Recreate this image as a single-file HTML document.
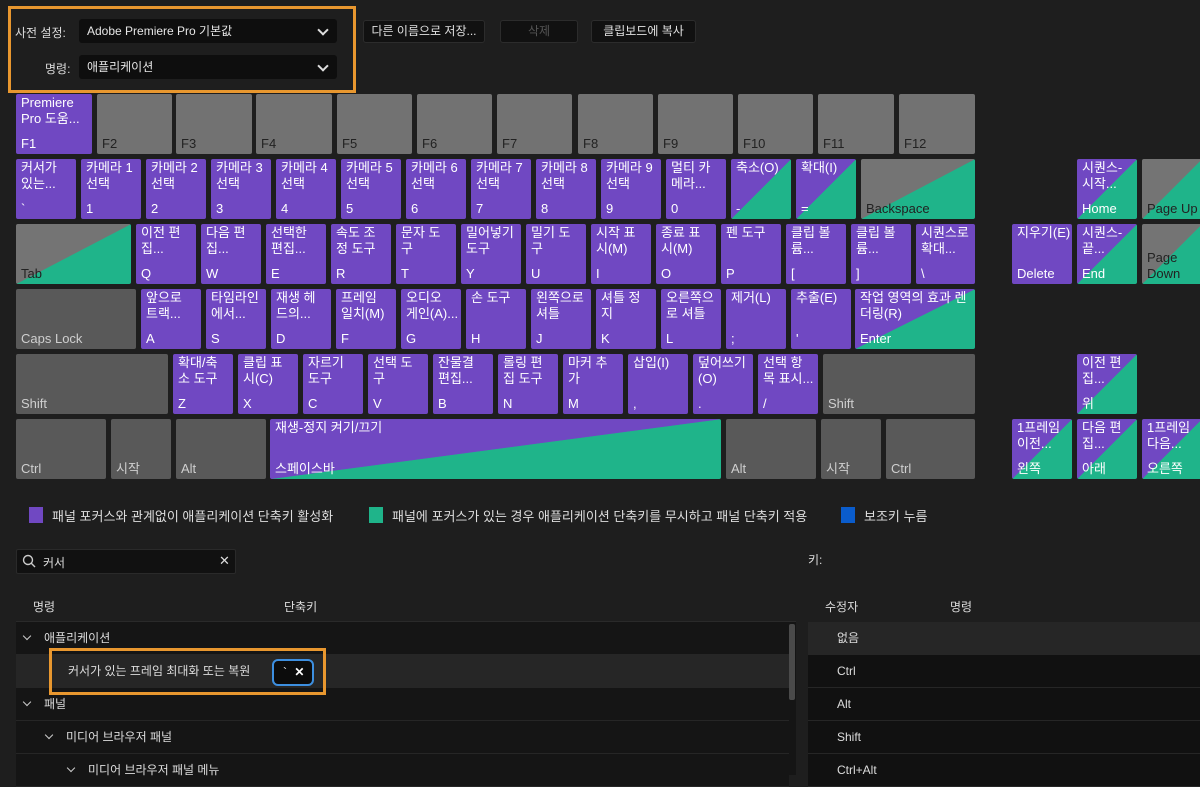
<!DOCTYPE html>
<html><head><meta charset="utf-8"><style>
*{margin:0;padding:0;box-sizing:border-box}
body{width:1200px;height:775px;background:#1e1e1e;font-family:"Liberation Sans","Noto Sans CJK KR",sans-serif;color:#ddd;position:relative;overflow:hidden;font-size:12px}
.a{position:absolute}
.k{position:absolute;height:60px;border-radius:2px;color:#fff;font-size:13px;line-height:16px;overflow:hidden}
.k .t{position:absolute;left:5px;top:1px;right:0;white-space:nowrap}
.k .b{position:absolute;left:5px;bottom:2px;right:0;white-space:nowrap}
.p{background:#7048c2}
.f{background:#727272;color:#222}
.g{background:#595959;color:#cfcfcf}
.pg{background:linear-gradient(to bottom right,#7048c2 50%,#1fb48a 50.3%)}
.gg{background:linear-gradient(to bottom right,#747474 50%,#1fb48a 50.3%);color:#222}
.dd{position:absolute;left:79px;width:258px;height:24px;background:#0e0e0e;border-radius:3px;color:#e6e6e6;font-size:12px;line-height:24px;padding-left:8px}
.dd::after{content:"";position:absolute;right:10px;top:7px;width:6px;height:6px;border-right:2px solid #ddd;border-bottom:2px solid #ddd;transform:rotate(45deg)}
.btn{position:absolute;top:20px;height:23px;background:#111;border:1px solid #2c2c2c;border-radius:3px;color:#e0e0e0;line-height:21px;text-align:center;font-size:12px}
.row{position:absolute;left:16px;width:773px;height:33px;border-bottom:1px solid #262626;background:#151515;line-height:32px;font-size:12px;color:#ddd}
.rr{position:absolute;left:808px;width:392px;height:33px;border-bottom:1px solid #262626;background:#111;line-height:32px;padding-left:29px;color:#ddd}
.chev{display:inline-block;width:6px;height:6px;border-right:1.5px solid #ccc;border-bottom:1.5px solid #ccc;transform:rotate(45deg);margin-right:14px;position:relative;top:-3px}
.lg{font-size:13px}
</style></head><body>

<div class="a" style="left:15px;top:24px;color:#ddd">사전 설정:</div>
<div class="a" style="left:45px;top:60px;color:#ddd">명령:</div>
<div class="dd" style="top:19px">Adobe Premiere Pro 기본값</div>
<div class="dd" style="top:55px">애플리케이션</div>
<div class="a" style="left:8px;top:6px;width:348px;height:87px;border:3px solid #e8972f"></div>
<div class="btn" style="left:363px;width:122px">다른 이름으로 저장...</div>
<div class="btn" style="left:500px;width:78px;color:#555">삭제</div>
<div class="btn" style="left:591px;width:105px">클립보드에 복사</div>

<!-- Row 1 -->
<div class="k p" style="left:16px;top:94px;width:76px"><div class="t">Premiere<br>Pro 도움...</div><div class="b">F1</div></div>
<div class="k f" style="left:97px;top:94px;width:75px"><div class="b">F2</div></div>
<div class="k f" style="left:176px;top:94px;width:76px"><div class="b">F3</div></div>
<div class="k f" style="left:256px;top:94px;width:76px"><div class="b">F4</div></div>
<div class="k f" style="left:337px;top:94px;width:75px"><div class="b">F5</div></div>
<div class="k f" style="left:417px;top:94px;width:75px"><div class="b">F6</div></div>
<div class="k f" style="left:497px;top:94px;width:75px"><div class="b">F7</div></div>
<div class="k f" style="left:578px;top:94px;width:75px"><div class="b">F8</div></div>
<div class="k f" style="left:658px;top:94px;width:75px"><div class="b">F9</div></div>
<div class="k f" style="left:738px;top:94px;width:75px"><div class="b">F10</div></div>
<div class="k f" style="left:818px;top:94px;width:76px"><div class="b">F11</div></div>
<div class="k f" style="left:899px;top:94px;width:76px"><div class="b">F12</div></div>

<!-- Row 2 -->
<div class="k p" style="left:16px;top:159px;width:60px"><div class="t">커서가<br>있는...</div><div class="b">`</div></div>
<div class="k p" style="left:81px;top:159px;width:60px"><div class="t">카메라 1<br>선택</div><div class="b">1</div></div>
<div class="k p" style="left:146px;top:159px;width:60px"><div class="t">카메라 2<br>선택</div><div class="b">2</div></div>
<div class="k p" style="left:211px;top:159px;width:60px"><div class="t">카메라 3<br>선택</div><div class="b">3</div></div>
<div class="k p" style="left:276px;top:159px;width:60px"><div class="t">카메라 4<br>선택</div><div class="b">4</div></div>
<div class="k p" style="left:341px;top:159px;width:60px"><div class="t">카메라 5<br>선택</div><div class="b">5</div></div>
<div class="k p" style="left:406px;top:159px;width:60px"><div class="t">카메라 6<br>선택</div><div class="b">6</div></div>
<div class="k p" style="left:471px;top:159px;width:60px"><div class="t">카메라 7<br>선택</div><div class="b">7</div></div>
<div class="k p" style="left:536px;top:159px;width:60px"><div class="t">카메라 8<br>선택</div><div class="b">8</div></div>
<div class="k p" style="left:601px;top:159px;width:60px"><div class="t">카메라 9<br>선택</div><div class="b">9</div></div>
<div class="k p" style="left:666px;top:159px;width:60px"><div class="t">멀티 카<br>메라...</div><div class="b">0</div></div>
<div class="k pg" style="left:731px;top:159px;width:60px"><div class="t">축소(O)</div><div class="b">-</div></div>
<div class="k pg" style="left:796px;top:159px;width:60px"><div class="t">확대(I)</div><div class="b">=</div></div>
<div class="k gg" style="left:861px;top:159px;width:114px"><div class="b">Backspace</div></div>
<div class="k pg" style="left:1077px;top:159px;width:60px"><div class="t">시퀀스-<br>시작...</div><div class="b">Home</div></div>
<div class="k gg" style="left:1142px;top:159px;width:60px"><div class="b">Page Up</div></div>

<!-- Row 3 -->
<div class="k gg" style="left:16px;top:224px;width:115px"><div class="b">Tab</div></div>
<div class="k p" style="left:136px;top:224px;width:60px"><div class="t">이전 편<br>집...</div><div class="b">Q</div></div>
<div class="k p" style="left:201px;top:224px;width:60px"><div class="t">다음 편<br>집...</div><div class="b">W</div></div>
<div class="k p" style="left:266px;top:224px;width:60px"><div class="t">선택한<br>편집...</div><div class="b">E</div></div>
<div class="k p" style="left:331px;top:224px;width:60px"><div class="t">속도 조<br>정 도구</div><div class="b">R</div></div>
<div class="k p" style="left:396px;top:224px;width:60px"><div class="t">문자 도<br>구</div><div class="b">T</div></div>
<div class="k p" style="left:461px;top:224px;width:60px"><div class="t">밀어넣기<br>도구</div><div class="b">Y</div></div>
<div class="k p" style="left:526px;top:224px;width:60px"><div class="t">밀기 도<br>구</div><div class="b">U</div></div>
<div class="k p" style="left:591px;top:224px;width:60px"><div class="t">시작 표<br>시(M)</div><div class="b">I</div></div>
<div class="k p" style="left:656px;top:224px;width:60px"><div class="t">종료 표<br>시(M)</div><div class="b">O</div></div>
<div class="k p" style="left:721px;top:224px;width:60px"><div class="t">펜 도구</div><div class="b">P</div></div>
<div class="k p" style="left:786px;top:224px;width:60px"><div class="t">클립 볼<br>륨...</div><div class="b">[</div></div>
<div class="k p" style="left:851px;top:224px;width:60px"><div class="t">클립 볼<br>륨...</div><div class="b">]</div></div>
<div class="k p" style="left:916px;top:224px;width:59px"><div class="t">시퀀스로<br>확대...</div><div class="b">\</div></div>
<div class="k p" style="left:1012px;top:224px;width:60px"><div class="t">지우기(E)</div><div class="b">Delete</div></div>
<div class="k pg" style="left:1077px;top:224px;width:60px"><div class="t">시퀀스-<br>끝...</div><div class="b">End</div></div>
<div class="k gg" style="left:1142px;top:224px;width:60px"><div class="b">Page<br>Down</div></div>

<!-- Row 4 -->
<div class="k g" style="left:16px;top:289px;width:120px"><div class="b">Caps Lock</div></div>
<div class="k p" style="left:141px;top:289px;width:60px"><div class="t">앞으로<br>트랙...</div><div class="b">A</div></div>
<div class="k p" style="left:206px;top:289px;width:60px"><div class="t">타임라인<br>에서...</div><div class="b">S</div></div>
<div class="k p" style="left:271px;top:289px;width:60px"><div class="t">재생 헤<br>드의...</div><div class="b">D</div></div>
<div class="k p" style="left:336px;top:289px;width:60px"><div class="t">프레임<br>일치(M)</div><div class="b">F</div></div>
<div class="k p" style="left:401px;top:289px;width:60px"><div class="t">오디오<br>게인(A)...</div><div class="b">G</div></div>
<div class="k p" style="left:466px;top:289px;width:60px"><div class="t">손 도구</div><div class="b">H</div></div>
<div class="k p" style="left:531px;top:289px;width:60px"><div class="t">왼쪽으로<br>셔틀</div><div class="b">J</div></div>
<div class="k p" style="left:596px;top:289px;width:60px"><div class="t">셔틀 정<br>지</div><div class="b">K</div></div>
<div class="k p" style="left:661px;top:289px;width:60px"><div class="t">오른쪽으<br>로 셔틀</div><div class="b">L</div></div>
<div class="k p" style="left:726px;top:289px;width:60px"><div class="t">제거(L)</div><div class="b">;</div></div>
<div class="k p" style="left:791px;top:289px;width:60px"><div class="t">추출(E)</div><div class="b">'</div></div>
<div class="k pg" style="left:855px;top:289px;width:120px"><div class="t">작업 영역의 효과 렌<br>더링(R)</div><div class="b">Enter</div></div>

<!-- Row 5 -->
<div class="k g" style="left:16px;top:354px;width:152px"><div class="b">Shift</div></div>
<div class="k p" style="left:173px;top:354px;width:60px"><div class="t">확대/축<br>소 도구</div><div class="b">Z</div></div>
<div class="k p" style="left:238px;top:354px;width:60px"><div class="t">클립 표<br>시(C)</div><div class="b">X</div></div>
<div class="k p" style="left:303px;top:354px;width:60px"><div class="t">자르기<br>도구</div><div class="b">C</div></div>
<div class="k p" style="left:368px;top:354px;width:60px"><div class="t">선택 도<br>구</div><div class="b">V</div></div>
<div class="k p" style="left:433px;top:354px;width:60px"><div class="t">잔물결<br>편집...</div><div class="b">B</div></div>
<div class="k p" style="left:498px;top:354px;width:60px"><div class="t">롤링 편<br>집 도구</div><div class="b">N</div></div>
<div class="k p" style="left:563px;top:354px;width:60px"><div class="t">마커 추<br>가</div><div class="b">M</div></div>
<div class="k p" style="left:628px;top:354px;width:60px"><div class="t">삽입(I)</div><div class="b">,</div></div>
<div class="k p" style="left:693px;top:354px;width:60px"><div class="t">덮어쓰기<br>(O)</div><div class="b">.</div></div>
<div class="k p" style="left:758px;top:354px;width:60px"><div class="t">선택 항<br>목 표시...</div><div class="b">/</div></div>
<div class="k g" style="left:823px;top:354px;width:152px"><div class="b">Shift</div></div>
<div class="k pg" style="left:1077px;top:354px;width:60px"><div class="t">이전 편<br>집...</div><div class="b">위</div></div>

<!-- Row 6 -->
<div class="k g" style="left:16px;top:419px;width:90px"><div class="b">Ctrl</div></div>
<div class="k g" style="left:111px;top:419px;width:60px"><div class="b">시작</div></div>
<div class="k g" style="left:176px;top:419px;width:90px"><div class="b">Alt</div></div>
<div class="k pg" style="left:270px;top:419px;width:451px"><div class="t">재생-정지 켜기/끄기</div><div class="b" style="color:#fff">스페이스바</div></div>
<div class="k g" style="left:726px;top:419px;width:90px"><div class="b">Alt</div></div>
<div class="k g" style="left:821px;top:419px;width:60px"><div class="b">시작</div></div>
<div class="k g" style="left:886px;top:419px;width:89px"><div class="b">Ctrl</div></div>
<div class="k pg" style="left:1012px;top:419px;width:60px"><div class="t">1프레임<br>이전...</div><div class="b">왼쪽</div></div>
<div class="k pg" style="left:1077px;top:419px;width:60px"><div class="t">다음 편<br>집...</div><div class="b">아래</div></div>
<div class="k pg" style="left:1142px;top:419px;width:60px"><div class="t">1프레임<br>다음...</div><div class="b">오른쪽</div></div>

<!-- legend -->
<div class="a" style="left:29px;top:507px;width:14px;height:16px;background:#7048c2"></div>
<div class="a lg" style="left:52px;top:506px;color:#ddd">패널 포커스와 관계없이 애플리케이션 단축키 활성화</div>
<div class="a" style="left:369px;top:507px;width:14px;height:16px;background:#1fb48a"></div>
<div class="a lg" style="left:392px;top:506px;color:#ddd">패널에 포커스가 있는 경우 애플리케이션 단축키를 무시하고 패널 단축키 적용</div>
<div class="a" style="left:841px;top:507px;width:14px;height:16px;background:#0a5ccc"></div>
<div class="a lg" style="left:864px;top:506px;color:#ddd">보조키 누름</div>

<!-- search -->
<div class="a" style="left:16px;top:549px;width:220px;height:25px;background:#111;border:1px solid #2a2a2a;border-radius:2px"></div>
<svg class="a" style="left:22px;top:554px" width="14" height="14" viewBox="0 0 14 14"><circle cx="6" cy="6" r="4.5" fill="none" stroke="#ccc" stroke-width="1.4"/><path d="M9.3 9.3L13 13" stroke="#ccc" stroke-width="1.4"/></svg>
<div class="a" style="left:43px;top:554px;color:#ddd">커서</div>
<div class="a" style="left:219px;top:553px;color:#ddd;font-size:13px">✕</div>
<div class="a" style="left:808px;top:551px;color:#ddd">키:</div>

<!-- headers -->
<div class="a" style="left:33px;top:598px;color:#ddd">명령</div>
<div class="a" style="left:284px;top:598px;color:#ddd">단축키</div>
<div class="a" style="left:825px;top:598px;color:#ddd">수정자</div>
<div class="a" style="left:950px;top:598px;color:#ddd">명령</div>

<!-- list -->
<div class="a" style="left:16px;top:621px;width:780px;height:154px;background:#151515;border-top:1px solid #2a2a2a"></div>
<div class="row" style="top:622px;padding-left:8px"><span class="chev"></span>애플리케이션</div>
<div class="row" style="top:655px;background:#262626;padding-left:52px">커서가 있는 프레임 최대화 또는 복원</div>
<div class="row" style="top:688px;padding-left:8px"><span class="chev"></span>패널</div>
<div class="row" style="top:721px;padding-left:30px"><span class="chev"></span>미디어 브라우저 패널</div>
<div class="row" style="top:754px;padding-left:52px"><span class="chev"></span>미디어 브라우저 패널 메뉴</div>
<div class="a" style="left:789px;top:624px;width:6px;height:76px;background:#4a4a4a;border-radius:2px"></div>

<div class="a" style="left:272px;top:659px;width:42px;height:27px;background:#0c0c0c;border:2px solid #3d8fe0;border-radius:6px;color:#fff;line-height:23px;padding-left:9px;font-size:12px">` <span style="font-weight:bold;margin-left:4px">✕</span></div>
<div class="a" style="left:49px;top:648px;width:277px;height:47px;border:3px solid #e8972f"></div>

<div class="rr" style="top:622px;background:#262626">없음</div>
<div class="rr" style="top:655px">Ctrl</div>
<div class="rr" style="top:688px">Alt</div>
<div class="rr" style="top:721px">Shift</div>
<div class="rr" style="top:754px">Ctrl+Alt</div>
</body></html>
